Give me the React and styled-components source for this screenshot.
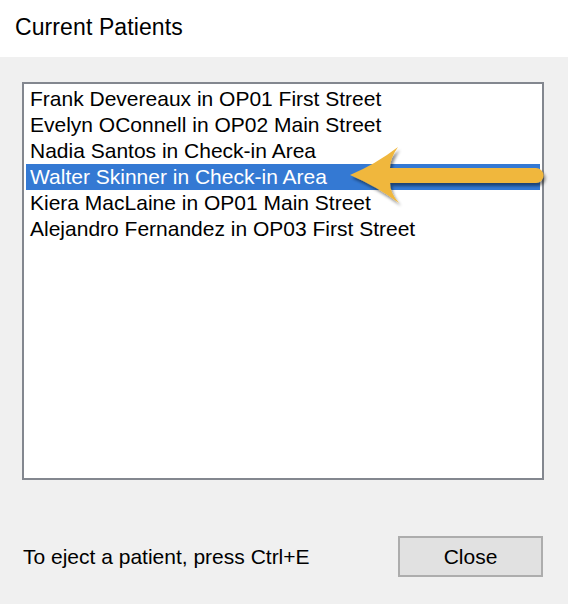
import React from "react";
import styled, { createGlobalStyle } from "styled-components";

const GlobalStyle = createGlobalStyle`
  html, body {
    margin: 0;
    padding: 0;
    background: #f0f0f0;
  }
  body {
    font-family: "Liberation Sans", Arial, sans-serif;
    color: #000;
  }
`;

const patients = [
  "Frank Devereaux in OP01 First Street",
  "Evelyn OConnell in OP02 Main Street",
  "Nadia Santos in Check-in Area",
  "Walter Skinner in Check-in Area",
  "Kiera MacLaine in OP01 Main Street",
  "Alejandro Fernandez in OP03 First Street",
];

const Dialog = styled.div`
  width: 568px;
  height: 604px;
  display: flex;
  flex-direction: column;
  background: #f0f0f0;
  overflow: hidden;
`;

const TitleBar = styled.div`
  height: 57px;
  background: #fff;
  display: flex;
  align-items: center;
  padding: 0 0 3px 15px;
  box-sizing: border-box;
  font-size: 23px;
  letter-spacing: 0.1px;
`;

const Body = styled.div`
  flex: 1;
  display: flex;
  flex-direction: column;
  padding: 25px 24px 0 22px;
`;

const ListBox = styled.div`
  position: relative;
  height: 398px;
  box-sizing: border-box;
  border: 2px solid #83878f;
  background: #fff;
  padding: 2px 2px;
`;

const Row = styled.div`
  height: 26px;
  line-height: 26px;
  padding-left: 4px;
  font-size: 21px;
  white-space: nowrap;
  background: ${(p) => (p.selected ? "#3479d3" : "transparent")};
  color: ${(p) => (p.selected ? "#fff" : "#000")};
`;

const Pointer = styled.svg`
  position: absolute;
  left: 316px;
  top: 56px;
  width: 212px;
  height: 72px;
  overflow: visible;
`;

const Footer = styled.div`
  display: flex;
  align-items: center;
  justify-content: space-between;
  padding: 56px 0 0 1px;
`;

const Hint = styled.span`
  font-size: 21px;
`;

const Button = styled.button`
  width: 145px;
  height: 41px;
  box-sizing: border-box;
  border: 2px solid #adadad;
  background: #e1e1e1;
  font-family: "Liberation Sans", Arial, sans-serif;
  font-size: 21px;
  color: #000;
  padding: 0;
  margin-right: 1px;
`;

const Arrow = () => (
  <Pointer viewBox="0 0 212 72">
    <defs>
      <filter id="arrowShadow" x="-10%" y="-30%" width="130%" height="170%">
        <feDropShadow dx="2" dy="3" stdDeviation="1.6" floodColor="#000" floodOpacity="0.45" />
      </filter>
    </defs>
    <path
      d="M10 35 Q36 24 58 7 Q50 18 50 28 L196 28 A7.5 7.5 0 0 1 196 43 L50 43 Q50 53 59 63 Q36 46 10 35 Z"
      fill="#f0b73d"
      filter="url(#arrowShadow)"
    />
  </Pointer>
);

export default function App() {
  return (
    <>
      <GlobalStyle />
      <Dialog>
        <TitleBar>Current Patients</TitleBar>
        <Body>
          <ListBox>
            {patients.map((name, i) => (
              <Row key={name} selected={i === 3}>
                {name}
              </Row>
            ))}
            <Arrow />
          </ListBox>
          <Footer>
            <Hint>To eject a patient, press Ctrl+E</Hint>
            <Button>Close</Button>
          </Footer>
        </Body>
      </Dialog>
    </>
  );
}
